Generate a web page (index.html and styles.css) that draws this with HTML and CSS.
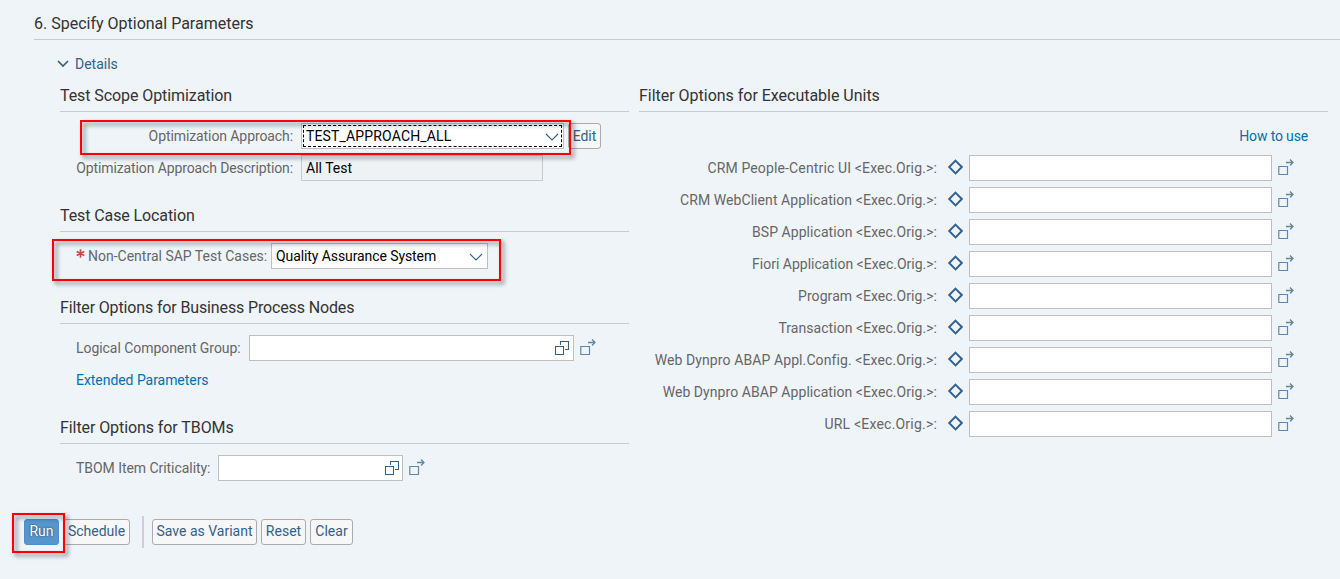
FILE: index.html
```html
<!DOCTYPE html>
<html lang="en">
<head>
<meta charset="utf-8">
<title>Specify Optional Parameters</title>
<link rel="stylesheet" href="styles.css">
</head>
<body>
<svg class="defs" aria-hidden="true">
  <symbol id="chevron" viewBox="0 0 14 8"><path d="M1 1l6 6 6-6" fill="none" stroke="#346187" stroke-width="1.1"/></symbol>
  <symbol id="help" viewBox="0 0 16 16"><path d="M1.500 6.500h8v8h-8zM6.500 5V1.500h8v8H11" fill="none" stroke="#346187" stroke-width="1.100"/></symbol>
  <symbol id="multi" viewBox="0 0 16 16"><path d="M.8 7.500h8.700v8H.8z" fill="none" stroke="#5f85a8" stroke-width="1.200"/><path d="M8 3.500h7M12 .5l3 3-3 3" fill="none" stroke="#5f85a8" stroke-width="1.300"/></symbol>
  <symbol id="diamond" viewBox="0 0 16 16"><path d="M8.500 1.700L14.800 8 8.500 14.300 2.200 8z" fill="none" stroke="#2d6190" stroke-width="1.900"/></symbol>
</svg>
<main class="page">
  <h1 class="title"><span>6. Specify Optional Parameters</span></h1>
  <div class="details"><svg class="toggle" viewBox="0 0 12 8"><path d="M1 1l5 5 5-5" fill="none" stroke="#346187" stroke-width="1.700"/></svg><span>Details</span></div>
  <div class="columns">
    <div class="column">
      <section class="group">
        <h2><span class="t-scope">Test Scope Optimization</span></h2>
        <div class="row"><label class="wide"><span class="t-approach">Optimization Approach:</span></label><div class="field focused approach"><span class="t-all">TEST_APPROACH_ALL</span><svg class="chev"><use href="#chevron"/></svg></div><button class="btn edit"><span>Edit</span></button></div>
        <div class="row"><label class="wide"><span class="t-desc">Optimization Approach Description:</span></label><div class="field readonly"><span>All Test</span></div></div>
      </section>
      <section class="group location">
        <h2><span class="t-location">Test Case Location</span></h2>
        <div class="row"><label class="required"><svg class="star" viewBox="0 0 9 9"><path d="M4.500 .3v8.400M.7 2.400l7.600 4.200M.7 6.600l7.600-4.200" stroke="#c84a4f" stroke-width="1.700"/></svg><span>Non-Central SAP Test Cases:</span></label><div class="field quality"><span class="t-quality">Quality Assurance System</span><svg class="chev"><use href="#chevron"/></svg></div></div>
      </section>
      <section class="group">
        <h2><span class="t-nodes">Filter Options for Business Process Nodes</span></h2>
        <div class="row"><label class="logical"><span class="t-logical">Logical Component Group:</span></label><div class="field component"><svg class="icon"><use href="#help"/></svg></div><svg class="multi"><use href="#multi"/></svg></div>
        <div class="row"><a class="link"><span class="t-ext">Extended Parameters</span></a></div>
      </section>
      <section class="group">
        <h2><span class="t-tboms">Filter Options for TBOMs</span></h2>
        <div class="row"><label class="tbom"><span class="t-tbom">TBOM Item Criticality:</span></label><div class="field criticality"><svg class="icon"><use href="#help"/></svg></div><svg class="multi"><use href="#multi"/></svg></div>
      </section>
    </div>
    <section class="column">
      <h2><span class="t-units">Filter Options for Executable Units</span></h2>
      <div class="row how"><a class="link"><span class="t-how">How to use</span></a></div>
      <div class="row"><label class="exec"><span class="t-people">CRM People-Centric UI &lt;Exec.Orig.&gt;:</span></label><svg class="diamond"><use href="#diamond"/></svg><div class="field unit"></div><svg class="multi"><use href="#multi"/></svg></div>
      <div class="row"><label class="exec"><span class="t-webclient">CRM WebClient Application &lt;Exec.Orig.&gt;:</span></label><svg class="diamond"><use href="#diamond"/></svg><div class="field unit"></div><svg class="multi"><use href="#multi"/></svg></div>
      <div class="row"><label class="exec"><span class="t-bsp">BSP Application &lt;Exec.Orig.&gt;:</span></label><svg class="diamond"><use href="#diamond"/></svg><div class="field unit"></div><svg class="multi"><use href="#multi"/></svg></div>
      <div class="row"><label class="exec"><span>Fiori Application &lt;Exec.Orig.&gt;:</span></label><svg class="diamond"><use href="#diamond"/></svg><div class="field unit"></div><svg class="multi"><use href="#multi"/></svg></div>
      <div class="row"><label class="exec"><span class="t-program">Program &lt;Exec.Orig.&gt;:</span></label><svg class="diamond"><use href="#diamond"/></svg><div class="field unit"></div><svg class="multi"><use href="#multi"/></svg></div>
      <div class="row"><label class="exec"><span class="t-transaction">Transaction &lt;Exec.Orig.&gt;:</span></label><svg class="diamond"><use href="#diamond"/></svg><div class="field unit"></div><svg class="multi"><use href="#multi"/></svg></div>
      <div class="row"><label class="exec"><span class="t-config">Web Dynpro ABAP Appl.Config. &lt;Exec.Orig.&gt;:</span></label><svg class="diamond"><use href="#diamond"/></svg><div class="field unit"></div><svg class="multi"><use href="#multi"/></svg></div>
      <div class="row"><label class="exec"><span class="t-dynpro">Web Dynpro ABAP Application &lt;Exec.Orig.&gt;:</span></label><svg class="diamond"><use href="#diamond"/></svg><div class="field unit"></div><svg class="multi"><use href="#multi"/></svg></div>
      <div class="row"><label class="exec"><span class="t-url">URL &lt;Exec.Orig.&gt;:</span></label><svg class="diamond"><use href="#diamond"/></svg><div class="field unit"></div><svg class="multi"><use href="#multi"/></svg></div>
    </section>
  </div>
  <div class="toolbar">
    <button class="btn run"><span>Run</span></button>
    <button class="btn schedule"><span>Schedule</span></button>
    <span class="separator"></span>
    <button class="btn save"><span>Save as Variant</span></button>
    <button class="btn reset"><span>Reset</span></button>
    <button class="btn clear"><span>Clear</span></button>
  </div>
  <div class="mark mark-approach"></div>
  <div class="mark mark-location"></div>
  <div class="mark mark-run"></div>
</main>
</body>
</html>
```
FILE: styles.css
```css
* { box-sizing: border-box; }
body { margin: 0; background: #eff4f8; font: 14px/20px Roboto, "Noto Sans", sans-serif; color: #666; }
.page { position: relative; width: 1340px; height: 579px; overflow: hidden; }
.defs { display: none; }
svg { display: block; flex: none; }
span { white-space: nowrap; }
h1, h2 { margin: 0; font-weight: 400; font-size: 16px; color: #333; border-bottom: 1px solid #c8cbce; }
.title { height: 40px; margin-left: 34px; line-height: 47px; }
.details { height: 40px; padding: 8px 0 0 57px; display: flex; align-items: center; gap: 6px; color: #346187; }
.toggle { width: 12px; height: 8px; }
.columns { display: grid; grid-template-columns: 569px 689px; gap: 10px; padding-left: 60px; height: 436px; }
h2 { height: 32px; line-height: 31px; margin-bottom: 8px; }
.group { margin-bottom: 16px; }
.location { margin-bottom: 20px; }
.row { height: 32px; display: flex; align-items: center; }
label { text-align: right; }
.wide { width: 233px; margin-right: 8px; }
.required { display: flex; align-items: center; width: 191px; margin: 0 4px 0 16px; gap: 3px; }
.star { width: 9px; height: 9px; margin-top: -6px; }
.logical { width: 165px; margin: 0 8px 0 16px; text-align: left; }
.tbom { width: 134px; margin: 0 8px 0 16px; text-align: left; }
.field { flex: none; height: 26px; background: #fff; border: 1px solid #bfbfbf; color: #000; display: flex; align-items: center; justify-content: space-between; padding: 0 4px; }
.approach { width: 263px; position: relative; }
.focused::after { content: ""; position: absolute; inset: 1px; border: 1px dashed #000; }
.readonly { width: 242px; background: #eff2f4; border-color: #c8cbce; }
.quality { width: 217px; }
.component { width: 325px; justify-content: flex-end; padding-right: 3px; }
.criticality { width: 185px; justify-content: flex-end; padding-right: 2px; }
.unit { width: 303px; }
.chev { width: 14px; height: 8px; margin-top: 2px; }
.icon { width: 16px; height: 16px; }
.multi { width: 16px; height: 16px; margin: 0 0 2px 6px; }
.link { color: #0070b1; }
.row > .link { margin-left: 16px; }
.how { justify-content: flex-end; padding-right: 20px; }
.exec { width: 298px; margin-right: 10px; }
.diamond { width: 16px; height: 16px; margin: 0 6px 2px 0; }
.btn { flex: none; height: 26px; padding: 0; border: 1px solid #ababab; border-radius: 3px; background: #f7f7f7; color: #346187; font: inherit; line-height: 24px; display: flex; justify-content: center; }
.edit { width: 33px; margin-left: 4px; }
.toolbar { display: flex; align-items: center; padding-left: 24px; height: 32px; }
.toolbar .btn { line-height: 22px; padding-bottom: 2px; }
.run { width: 35px; background: #5496cd; border-color: #4a8fc8; color: #fff; text-shadow: 0 0 2px #234; }
.schedule { width: 67px; margin: 0 12px 0 4px; }
.separator { width: 2px; height: 32px; background: #c9d0d8; margin-right: 8px; }
.save { width: 105px; }
.reset { width: 45px; margin: 0 4px; }
.clear { width: 43px; }

.t-scope, .t-tboms { letter-spacing: -.08px; }
.t-location { letter-spacing: -.1px; }
.t-nodes { letter-spacing: -.14px; }
.t-units { letter-spacing: -.02px; }
.t-approach { letter-spacing: -.09px; }
.t-desc { letter-spacing: -.12px; }
.t-all { letter-spacing: .15px; }
.t-quality { letter-spacing: -.09px; }
.t-logical, .t-ext, .t-tbom { letter-spacing: -.05px; }
.t-how { letter-spacing: -.15px; }
.t-people { letter-spacing: .14px; }
.t-webclient { letter-spacing: .07px; }
.t-bsp, .t-transaction { letter-spacing: .05px; }
.t-program { letter-spacing: .07px; }
.t-config { letter-spacing: .1px; }
.t-dynpro { letter-spacing: .06px; }
.t-url { letter-spacing: .2px; }

/* Red callouts laid over the form */
.mark { position: absolute; border: 2px solid #f00; filter: drop-shadow(3px 3px 2px rgba(0,0,0,.5)); pointer-events: none; }
.mark-approach { left: 80px; top: 120px; width: 491px; height: 35px; }
.mark-location { left: 52px; top: 239px; width: 449px; height: 42px; }
.mark-run { left: 12px; top: 513px; width: 53px; height: 40px; }
```
